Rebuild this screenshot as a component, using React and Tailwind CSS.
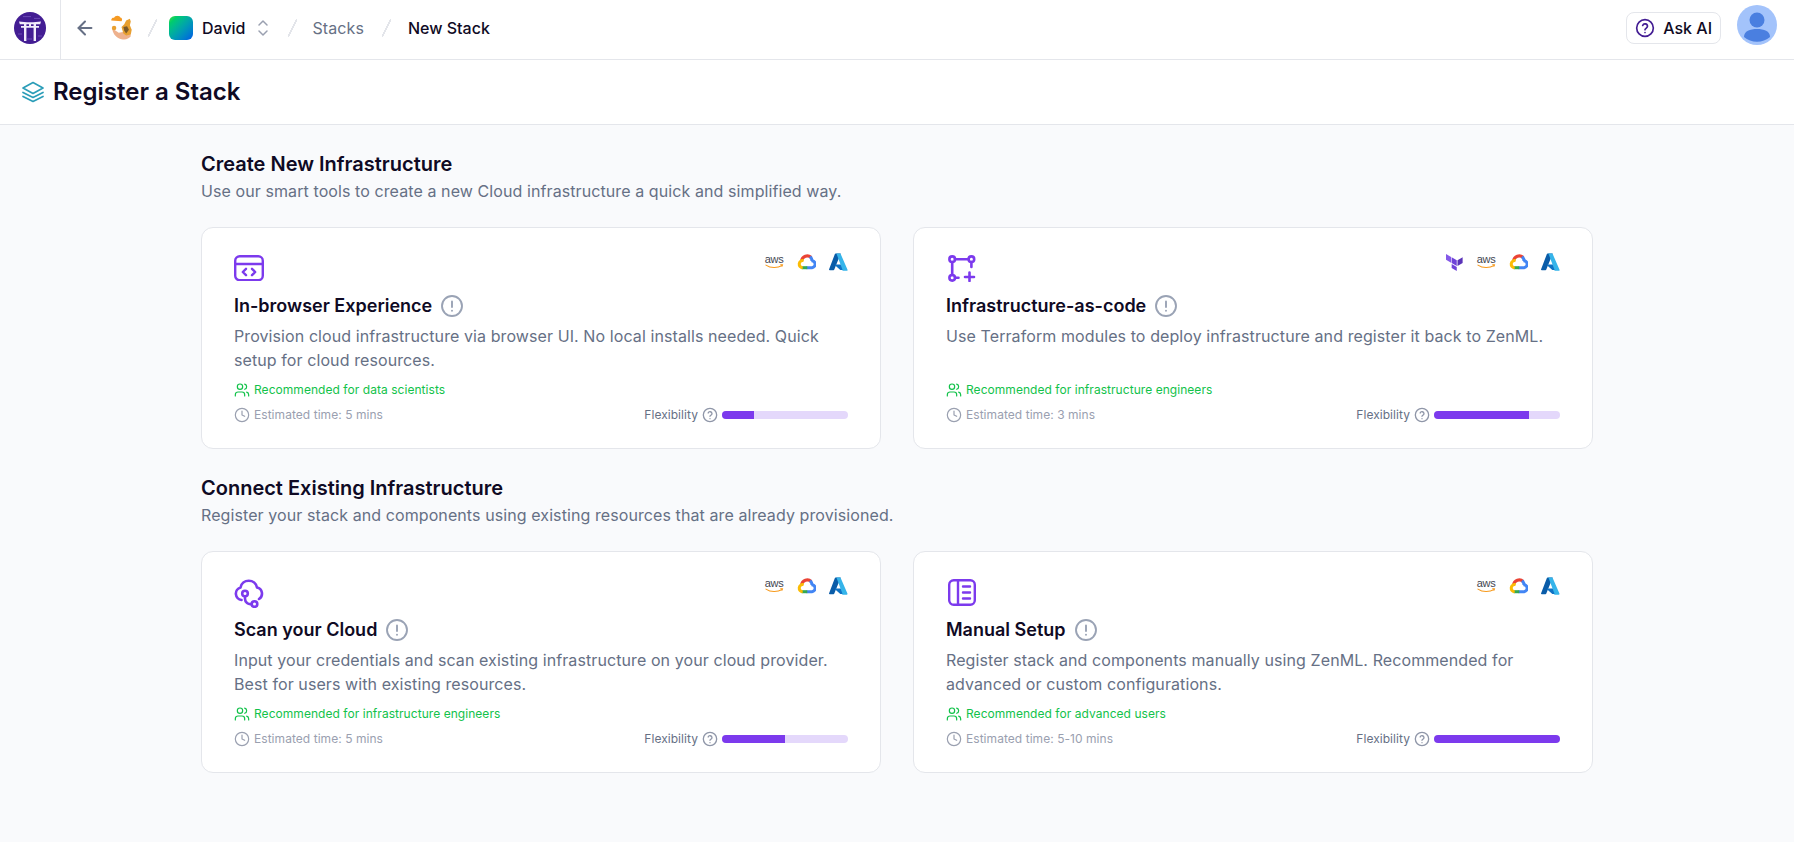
import { ArrowLeft, Users, Clock } from 'lucide-react';

const Aws = () => (
  <span className="flex h-5 w-[20px] flex-col items-center justify-center">
    <span className="text-[11px] leading-[9px] tracking-tight text-[#3f4650] [font-family:'Liberation_Sans',sans-serif]">aws</span>
    <svg viewBox="0 0 20 5" className="h-[5px] w-[19px]" fill="none">
      <path d="M1 1c5 3.400 12 3.400 17 .4" stroke="#f79a1c" strokeWidth="1.100" strokeLinecap="round" />
      <path d="M16 .6l2.600-.2-.8 2.400" stroke="#f79a1c" strokeWidth=".9" fill="none" />
    </svg>
  </span>
);

const Gcp = () => (
  <svg viewBox="0 0 20 16" className="h-[16px] w-[19px]" fill="none" strokeWidth="3.200">
    <path d="M4.800 7A6 6 0 0 1 15 3.400" stroke="#ea4335" />
    <path d="M13.800 2.400a6 6 0 0 1 2 4.600" stroke="#4285f4" />
    <path d="M15 6.600a3.700 3.700 0 0 1 .8 7.400H10" stroke="#4285f4" />
    <path d="M10.800 14H4.800" stroke="#34a853" />
    <path d="M6 14a3.800 3.800 0 1 1 1-7.500" stroke="#fbbc05" />
  </svg>
);

const Azure = () => (
  <svg viewBox="0 0 20 18" className="h-[18px] w-[19px]">
    <path d="M7 0h5.400L5.600 17a1 1 0 0 1-.9.6H.8a.8.8 0 0 1-.7-1.100L6.200.6A.9.9 0 0 1 7 0z" fill="#0a5ca8" />
    <path d="M14.800 11.600H6.600a.4.4 0 0 0-.3.7l5.300 4.900a1 1 0 0 0 .6.3h5z" fill="#0f72c4" />
    <path d="M12.300.6a.9.9 0 0 0-.8-.6H7.200a.9.9 0 0 1 .8.6l6.100 16.400a.8.8 0 0 1-.8 1.100h5.300a.8.8 0 0 0 .8-1.100z" fill="#35b4ea" />
  </svg>
);

const Terraform = () => (
  <svg viewBox="0 0 18 18" className="h-[17px] w-[17px]" fill="#6f42d8">
    <path d="M0 0l5.400 3.100v6.200L0 6.200z" fill="#8459e8" />
    <path d="M6 3.400l5.400 3.100v6.200L6 9.600z" />
    <path d="M6 10.700l5.400 3.100V18L6 14.900z" />
    <path d="M12.200 6.500l5.400-3.100v6.200l-5.400 3.100z" fill="#5a33b8" />
  </svg>
);

const BrowserIcon = () => (
  <svg viewBox="0 0 30 26.400" className="h-[26.400px] w-[30px]" fill="none" stroke="#7c3aed" strokeWidth="2.400" strokeLinecap="round" strokeLinejoin="round">
    <rect x="1.200" y="1.200" width="27.600" height="24" rx="4.500" />
    <path d="M1.200 9h27.600" />
    <path d="M12 13.800l-3.200 3.200 3.200 3.200M18 13.800l3.200 3.200-3.200 3.200" />
  </svg>
);

const TransformIcon = () => (
  <svg viewBox="0 0 28 27" className="ml-[2px] h-[27px] w-[28px]" fill="none" stroke="#7c3aed" strokeWidth="2.600" strokeLinecap="round" strokeLinejoin="round">
    <circle cx="4.200" cy="4.200" r="2.800" />
    <circle cx="23.400" cy="4.200" r="2.800" />
    <circle cx="4.200" cy="22.800" r="2.800" />
    <path d="M7 4.200h13.600M4.200 7v13M23.400 7v5M7 22.800h3.500M21.500 17.500v8.500M17 22h9" />
  </svg>
);

const CloudIcon = () => (
  <svg viewBox="0 0 30 29" className="h-[29px] w-[30px]" fill="none" stroke="#7c3aed" strokeWidth="2.600" strokeLinecap="round" strokeLinejoin="round">
    <path d="M7.500 21A6.400 6.400 0 0 1 6.500 8.500a8.400 8.400 0 0 1 16.500 0A6.300 6.300 0 0 1 25 20" />
    <circle cx="11" cy="14.500" r="2.800" />
    <circle cx="20.500" cy="25" r="2.800" />
    <path d="M11 17.300v2.400a5.400 5.400 0 0 0 6.700 5.300" />
  </svg>
);

const ManualIcon = () => (
  <svg viewBox="0 0 28 27" className="ml-[2px] h-[27px] w-[28px]" fill="none" stroke="#7c3aed" strokeWidth="2.400" strokeLinecap="round" strokeLinejoin="round">
    <rect x="1.200" y="1.200" width="25.600" height="24.600" rx="4.500" />
    <path d="M10 1.200v24.600M15 7.500h7M15 13.500h7M15 19.500h7" />
  </svg>
);

const WarnIcon = () => (
  <svg viewBox="0 0 24 24" className="h-6 w-6" fill="none" stroke="#9aa3b5" strokeWidth="1.900" strokeLinecap="round">
    <circle cx="12" cy="12" r="10" />
    <path d="M12 7.500v5.500M12 16.600v.1" />
  </svg>
);

const HelpIcon = ({ className, color }) => (
  <svg viewBox="0 0 24 24" className={className} fill="none" stroke={color} strokeWidth="2" strokeLinecap="round" strokeLinejoin="round">
    <circle cx="12" cy="12" r="10" />
    <path d="M9.200 9a3 3 0 0 1 5.800 1c0 2-3 2.600-3 4" />
    <path d="M12 17.400v.1" />
  </svg>
);

const Slash = () => <span className="block h-[18px] w-[9px] bg-[linear-gradient(to_bottom_right,transparent_45%,#e3e5ea_45%,#e3e5ea_55%,transparent_55%)]" />;

const cards = [
  [
    { title: 'In-browser Experience', icon: BrowserIcon, desc: 'Provision cloud infrastructure via browser UI. No local installs needed. Quick setup for cloud resources.', rec: 'Recommended for data scientists', time: 'Estimated time: 5 mins', flex: 25, logos: [Aws, Gcp, Azure] },
    { title: 'Infrastructure-as-code', icon: TransformIcon, desc: 'Use Terraform modules to deploy infrastructure and register it back to ZenML.', rec: 'Recommended for infrastructure engineers', time: 'Estimated time: 3 mins', flex: 75, logos: [Terraform, Aws, Gcp, Azure] },
  ],
  [
    { title: 'Scan your Cloud', icon: CloudIcon, desc: 'Input your credentials and scan existing infrastructure on your cloud provider. Best for users with existing resources.', rec: 'Recommended for infrastructure engineers', time: 'Estimated time: 5 mins', flex: 50, logos: [Aws, Gcp, Azure] },
    { title: 'Manual Setup', icon: ManualIcon, desc: 'Register stack and components manually using ZenML. Recommended for advanced or custom configurations.', rec: 'Recommended for advanced users', time: 'Estimated time: 5-10 mins', flex: 100, logos: [Aws, Gcp, Azure] },
  ],
];

function StackCard({ card }) {
  const Icon = card.icon;
  return (
    <div className="h-[222px] rounded-xl border border-[#e4e6eb] bg-white px-8 pt-[27px]">
      <div className="flex h-[28px] items-start justify-between">
        <Icon />
        <div className="-mt-[3px] flex items-center gap-[13px]">
          {card.logos.map((Logo, i) => <Logo key={i} />)}
        </div>
      </div>
      <div className="mt-[9px] flex h-7 items-center gap-2">
        <h3 className="text-lg font-semibold text-[#0f0a24]">{card.title}</h3>
        <WarnIcon />
      </div>
      <p className="mt-1 h-12 text-base tracking-[0.09px] text-[#667085]">{card.desc}</p>
      <div className="mt-2 flex h-5 items-center gap-1 text-xs tracking-[0.05px] text-[#12c24a]">
        <Users className="h-4 w-4" strokeWidth={1.8} />
        <span>{card.rec}</span>
      </div>
      <div className="mt-[2px] flex h-[26px] items-center justify-between text-xs tracking-[0.05px]">
        <div className="flex items-center gap-1 text-[#9aa0b0]">
          <Clock className="h-4 w-4" strokeWidth={1.8} />
          <span>{card.time}</span>
        </div>
        <div className="flex items-center gap-1">
          <span className="text-[#667085]">Flexibility</span>
          <HelpIcon className="h-4 w-4" color="#8f96a8" />
          <div className="h-2 w-[126px] overflow-hidden rounded-full bg-[#e4d8fb]">
            <div className="h-full bg-[#7c3aed]" style={{ width: `${card.flex}%` }} />
          </div>
        </div>
      </div>
    </div>
  );
}

function Section({ title, sub, items, className }) {
  return (
    <section className={className}>
      <h2 className="text-xl font-semibold text-[#0f0a24]">{title}</h2>
      <p className="mt-[1px] text-base tracking-[0.09px] text-[#667085]">{sub}</p>
      <div className="mt-6 grid grid-cols-2 gap-8">
        {items.map((c) => <StackCard key={c.title} card={c} />)}
      </div>
    </section>
  );
}

export default function App() {
  return (
    <div className="min-h-[842px] bg-[#f9fafc] font-['Inter',sans-serif] text-[#0f0a24]">
      <header className="flex h-[60px] border-b border-[#e4e6eb] bg-white">
        <div className="flex h-full w-[61px] items-center justify-center border-r border-[#e4e6eb] pb-1">
          <svg viewBox="0 0 32 32" className="-ml-[1px] h-8 w-8">
            <circle cx="16" cy="16" r="16" fill="#431d93" />
            <path d="M5 9.400c6 1 16 1 22 0l-.8 2.800H5.800zM7 14h18v1.800H7z" fill="#f2edfb" />
            <path d="M10 12h2.400v17H10zM19.600 12H22v17h-2.400zM15 11.600h2v3h-2z" fill="#f2edfb" />
            <path d="M9 4.600h8M20 6.400h6M4 22h4M24 24h4M12 27h6" stroke="#7c5cc4" strokeWidth=".7" />
          </svg>
        </div>
        <div className="flex flex-1 items-center pb-1 pr-[17px]">
          <ArrowLeft className="ml-[13px] h-[22px] w-[22px] text-[#667085]" strokeWidth={2.2} />
          <svg viewBox="0 0 24 28" className="ml-[14px] h-[26px] w-[23px]">
            <path d="M1 6c0-3 2-3 3-3 1-3 6-3 7 0 2 0 2 3 1 3.600z" fill="#f59a23" />
            <path d="M2 15c3 1 5 3 7 4l6-1 6-1 1 6c-2 3-6 4-10 3-5-1-9-5-10-11z" fill="#eeb18d" />
            <path d="M12 13l3-3 2-4 4-2 1 3-1 4 2 5-1 5-5 1-3-2z" fill="#e8a030" />
            <path d="M14 13l4-1 2 4-3 4-2-3z" fill="#7a5a2c" />
            <circle cx="4" cy="14" r="2.400" fill="#e8a030" />
          </svg>
          <span className="ml-[15px]"><Slash /></span>
          <span className="ml-3 block h-6 w-6 rounded-md bg-gradient-to-br from-[#30e024] to-[#0a55e6]" />
          <span className="ml-[9px] font-medium">David</span>
          <svg viewBox="0 0 12 20" className="ml-[11px] h-5 w-3" fill="none" stroke="#9aa0b0" strokeWidth="1.500" strokeLinecap="round" strokeLinejoin="round">
            <path d="M2 7l4-4 4 4M2 13l4 4 4-4" />
          </svg>
          <span className="ml-[19px]"><Slash /></span>
          <span className="ml-4 tracking-[0.09px] text-[#667085]">Stacks</span>
          <span className="ml-[18px]"><Slash /></span>
          <span className="ml-[17px] font-medium">New Stack</span>
          <div className="ml-auto flex items-center gap-4">
            <button className="flex h-8 items-center gap-2 rounded-lg border border-[#e4e6eb] pl-2 pr-2 font-medium">
              <HelpIcon className="h-5 w-5" color="#431d93" />
              Ask AI
            </button>
            <svg viewBox="0 0 40 40" className="-mt-[6px] h-10 w-10">
              <circle cx="20" cy="20" r="20" fill="#a3c3fb" />
              <circle cx="20" cy="15" r="7.500" fill="#4a7fe0" />
              <path d="M7 32c0-6 6-8 13-8s13 2 13 8a20 20 0 0 1-26 0z" fill="#4a7fe0" />
            </svg>
          </div>
        </div>
      </header>
      <div className="flex h-[65px] items-center gap-2 border-b border-[#e4e6eb] bg-white pl-[21px]">
        <svg viewBox="0 0 24 24" className="h-6 w-6" fill="none" stroke="#2b9db8" strokeWidth="1.700" strokeLinejoin="round" strokeLinecap="round">
          <path d="M12 2.500l10 5.500-10 5.500L2 8z" />
          <path d="M2 12.500l10 5 10-5" />
          <path d="M2 16.500l10 5 10-5" />
        </svg>
        <h1 className="text-2xl font-semibold">Register a Stack</h1>
      </div>
      <main className="mx-auto w-[1392px] pt-[25px]">
        <Section title="Create New Infrastructure" sub="Use our smart tools to create a new Cloud infrastructure a quick and simplified way." items={cards[0]} />
        <Section className="mt-[25px]" title="Connect Existing Infrastructure" sub="Register your stack and components using existing resources that are already provisioned." items={cards[1]} />
      </main>
    </div>
  );
}
